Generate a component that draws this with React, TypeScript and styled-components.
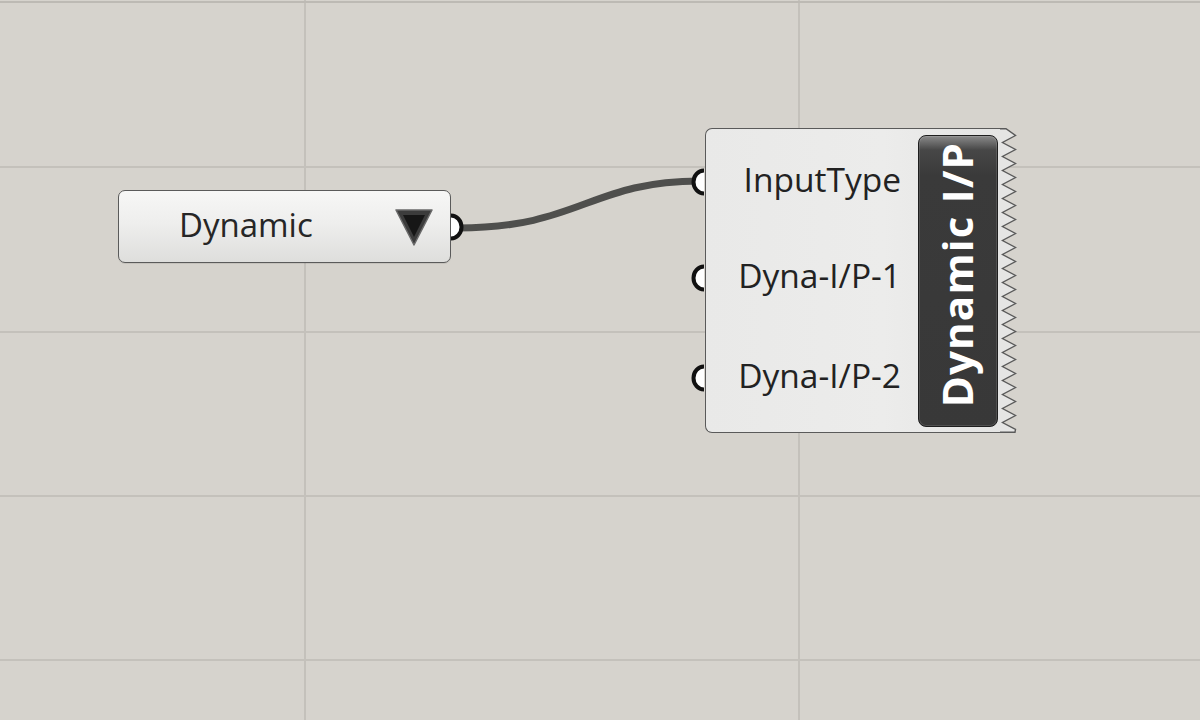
import React from "react";
import styled, { createGlobalStyle } from "styled-components";

const Global = createGlobalStyle`
  html, body { margin: 0; padding: 0; }
  body { width: 1200px; height: 720px; overflow: hidden; font-family: "Open Sans", "Noto Sans", sans-serif; }
`;

const Canvas = styled.div`
  position: relative;
  width: 1200px;
  height: 720px;
  overflow: hidden;
  background-color: #d6d3cd;
  background-image:
    linear-gradient(to bottom, transparent 1px, #bdbab4 1px, #bdbab4 3px, transparent 3px),
    linear-gradient(to bottom, transparent 166px, #c4c1bb 166px, #c4c1bb 168px, transparent 168px),
    linear-gradient(to bottom, transparent 331px, #c4c1bb 331px, #c4c1bb 333px, transparent 333px),
    linear-gradient(to bottom, transparent 495px, #c4c1bb 495px, #c4c1bb 497px, transparent 497px),
    linear-gradient(to bottom, transparent 659px, #c4c1bb 659px, #c4c1bb 661px, transparent 661px),
    linear-gradient(to right, transparent 304px, #c4c1bb 304px, #c4c1bb 306px, transparent 306px),
    linear-gradient(to right, transparent 798px, #c4c1bb 798px, #c4c1bb 800px, transparent 800px);
`;

const WireLayer = styled.svg`
  position: absolute;
  inset: 0;
  width: 1200px;
  height: 720px;
  pointer-events: none;
`;

const ValueList = styled.div`
  position: absolute;
  left: 118px;
  top: 190px;
  width: 333px;
  height: 73px;
  box-sizing: border-box;
  border: 1.5px solid #5a5a5a;
  border-radius: 7px;
  background: linear-gradient(to bottom, #f7f7f6 0%, #eeeeed 45%, #dededc 100%);
  display: flex;
  align-items: center;
  padding: 0 16px 0 60px;
  box-shadow: 0 1px 0 rgba(0,0,0,0.08);
`;

const ListText = styled.span`
  flex: 1;
  font-family: "Open Sans", "Noto Sans", sans-serif;
  font-size: 33px;
  color: #262626;
  line-height: 1;
  margin-top: -4px;
`;

const Node = styled.div`
  position: absolute;
  left: 705px;
  top: 128px;
  width: 312px;
  height: 305px;
  display: flex;
`;

const Body = styled.div`
  flex: 1;
  box-sizing: border-box;
  border: 1.5px solid #5a5a5a;
  border-right: none;
  border-radius: 7px 0 0 7px;
  background: linear-gradient(to right, #e9e9e8 0%, #ececeb 60%, #e4e4e3 100%);
  display: flex;
  padding: 6px 4px 5px 0;
`;

const Inputs = styled.div`
  flex: 1;
  display: flex;
  flex-direction: column;
  align-items: flex-end;
  padding-right: 17px;
`;

const InputLabel = styled.div<{ $gap: number }>`
  height: 40px;
  margin-top: ${(p) => p.$gap}px;
  display: flex;
  align-items: center;
  font-family: "Open Sans", "Noto Sans", sans-serif;
  font-size: 33.5px;
  color: #222;
  line-height: 1;
  padding-bottom: 6px;
  box-sizing: border-box;
`;

const NamePanel = styled.div`
  width: 80px;
  box-sizing: border-box;
  border: 1.5px solid #1e1e1e;
  border-radius: 8px;
  background: linear-gradient(to bottom, #8a8a8a 0px, #474747 14px, #3a3a3a 40px, #383838 100%);
  display: flex;
  align-items: center;
  justify-content: center;
  box-shadow: inset 0 0 0 1px rgba(255,255,255,0.12);
`;

const NameText = styled.span`
  writing-mode: vertical-rl;
  transform: rotate(180deg);
  font-family: "Open Sans", "Noto Sans", sans-serif;
  font-weight: 700;
  font-size: 42px;
  line-height: 1;
  color: #ffffff;
  letter-spacing: 1.2px;
  margin-bottom: 12px;
  margin-left: -2px;
`;

const Zig = styled.svg`
  width: 17px;
  height: 305px;
  flex: none;
  margin-left: -2px;
`;

const Port = styled.svg<{ $x: number; $y: number }>`
  position: absolute;
  left: ${(p) => p.$x}px;
  top: ${(p) => p.$y}px;
  width: 30px;
  height: 30px;
  overflow: visible;
`;

function zigPoints() {
  const list: string[] = ["0,0.75", "6,0.75"];
  let cy = 4;
  let i = 0;
  while (cy < 300) {
    list.push(`${i % 2 === 0 ? 15.5 : 2.5},${cy + 3.5}`);
    cy += 7;
    i++;
  }
  list.push("15,304.25", "0,304.25");
  return list.join(" ");
}

function InPort({ x, y }: { x: number; y: number }) {
  return (
    <Port $x={x - 15} $y={y - 15} viewBox="0 0 30 30">
      <path d="M15 3.5 A10.5 11.5 0 0 0 15 26.5" fill="#ffffff" stroke="#111" strokeWidth="4" />
    </Port>
  );
}

function OutPort({ x, y }: { x: number; y: number }) {
  return (
    <Port $x={x - 15} $y={y - 15} viewBox="0 0 30 30">
      <path d="M15 3.5 A10.5 11.5 0 0 1 15 26.5" fill="#ffffff" stroke="#111" strokeWidth="4" />
    </Port>
  );
}

const Triangle = () => (
  <svg width="40" height="40" viewBox="0 0 40 40">
    <polygon points="2,3 38,3 20,38" fill="#3c3c3c" stroke="#6a6a6a" strokeWidth="1.5" strokeLinejoin="round" />
    <polygon points="9,8 31,8 20,30" fill="#161616" />
  </svg>
);

export default function App() {
  return (
    <>
      <Global />
      <Canvas>
        <WireLayer viewBox="0 0 1200 720">
          <path d="M458 228 C 580 228, 590 181, 700 181" fill="none" stroke="#4f4f4d" strokeWidth="7" strokeLinecap="round" />
        </WireLayer>
        <ValueList>
          <ListText>Dynamic</ListText>
          <Triangle />
        </ValueList>
        <OutPort x={451} y={227} />
        <Node>
          <Body>
            <Inputs>
              <InputLabel $gap={28}>InputType</InputLabel>
              <InputLabel $gap={56}>Dyna-I/P-1</InputLabel>
              <InputLabel $gap={60}>Dyna-I/P-2</InputLabel>
            </Inputs>
            <NamePanel>
              <NameText>Dynamic I/P</NameText>
            </NamePanel>
          </Body>
          <Zig viewBox="0 0 17 305">
            <polygon points={zigPoints()} fill="#e5e5e4" />
            <polyline points={zigPoints()} fill="none" stroke="#5a5a5a" strokeWidth="1.4" />
          </Zig>
        </Node>
        <InPort x={704} y={182} />
        <InPort x={704} y={278} />
        <InPort x={704} y={378} />
      </Canvas>
    </>
  );
}
